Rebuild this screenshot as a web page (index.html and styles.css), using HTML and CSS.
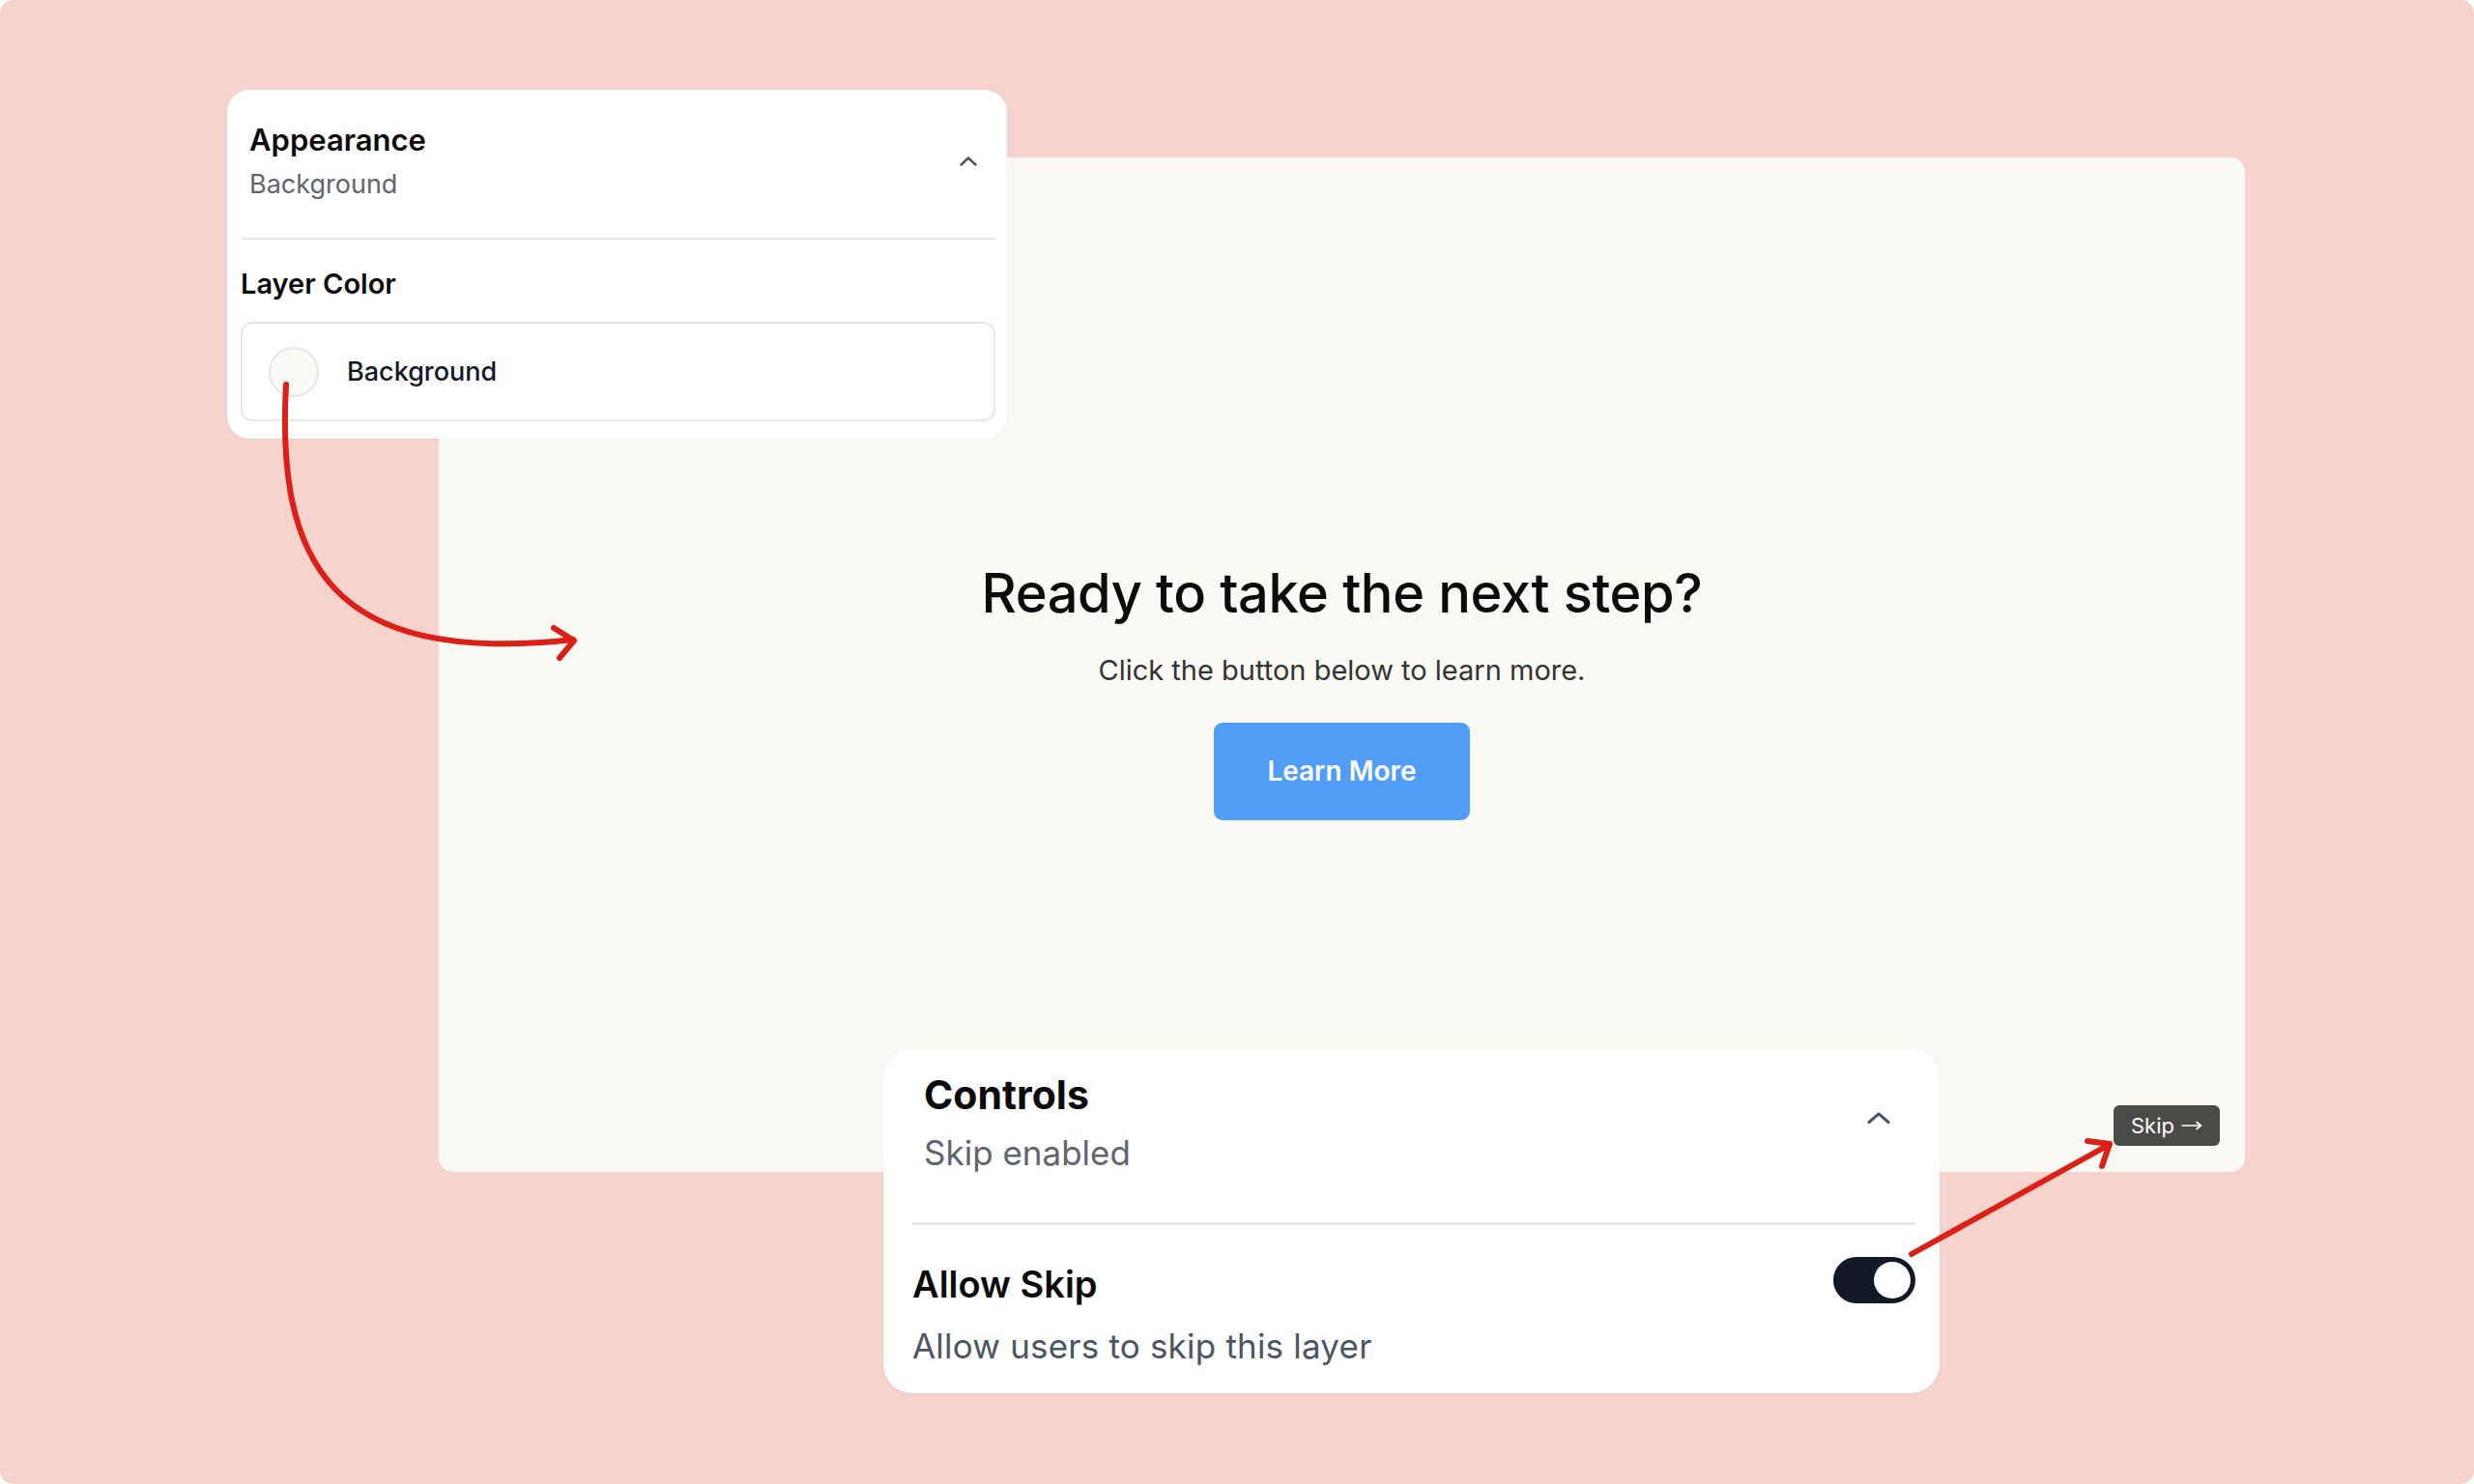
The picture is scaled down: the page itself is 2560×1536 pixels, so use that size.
FILE: index.html
```html
<!DOCTYPE html>
<html lang="en">
<head>
<meta charset="UTF-8" />
<meta name="viewport" content="width=device-width, initial-scale=1" />
<title>Layer settings</title>
<link rel="stylesheet" href="styles.css">
</head>
<body>
  <div class="frame">
    <section class="stage">
      <div class="cta">
        <h2 class="cta-title">Ready to take the next step?</h2>
        <p class="cta-text">Click the button below to learn more.</p>
        <button class="cta-button">Learn More</button>
      </div>
      <button class="skip">Skip
        <svg class="skip-arrow" viewBox="0 0 22 10" aria-hidden="true">
          <path d="M1 5 H20 M16 1.5 L20.5 5 L16 8.5" />
        </svg>
      </button>
    </section>

    <aside class="panel panel-appearance">
      <div class="panel-head">
        <div>
          <div class="panel-title">Appearance</div>
          <div class="panel-sub">Background</div>
        </div>
        <svg class="chevron" viewBox="0 0 18 10" aria-hidden="true">
          <path d="M1.5 8.5 L9 1.5 L16.5 8.5" />
        </svg>
      </div>
      <div class="panel-body">
        <div class="field-label">Layer Color</div>
        <div class="color-field">
          <span class="swatch"></span>
          <span class="color-name">Background</span>
        </div>
      </div>
    </aside>

    <aside class="panel panel-controls">
      <div class="panel-head">
        <div>
          <div class="panel-title">Controls</div>
          <div class="panel-sub">Skip enabled</div>
        </div>
        <svg class="chevron" viewBox="0 0 24 12" aria-hidden="true">
          <path d="M2 10.5 L12 1.8 L22 10.5" />
        </svg>
      </div>
      <div class="panel-body setting">
        <div>
          <div class="setting-name">Allow Skip</div>
          <div class="setting-desc">Allow users to skip this layer</div>
        </div>
        <span class="toggle is-on"><span class="knob"></span></span>
      </div>
    </aside>

    <!-- red pointer arrows drawn on top of everything -->
    <svg class="annotations" viewBox="0 0 2560 1536" aria-hidden="true">
      <path d="M296 398 C 286 580, 340 690, 593 662" />
      <path d="M573 650 L594 663 L579 681" />
      <path d="M1978 1298 L2182 1185" />
      <path d="M2160 1181 L2183 1184 L2175 1207" />
    </svg>
  </div>
</body>
</html>
```

FILE: styles.css
```css
:root {
  --pink: #f6d3cd;
  --paper: #faf9f3;
  --line: #e5e7eb;
  --ink: #0b0b0c;
  --muted: #5f6570;
  --blue: #519df5;
  --red: #dc1f17;
}
html, body {
  margin: 0;
  background: #fff;
  font-family: Inter, "Liberation Sans", sans-serif;
  color: var(--ink);
}
.frame {
  position: relative;
  width: 2560px;
  height: 1536px;
  box-sizing: border-box;
  padding: 163px 237px 323px 454px;
  background: var(--pink);
  border-radius: 14px;
  overflow: hidden;
}

/* preview canvas */
.stage {
  position: relative;
  height: 100%;
  box-sizing: border-box;
  padding-top: 51px;
  background: var(--paper);
  border-radius: 15px;
  display: flex;
  flex-direction: column;
  align-items: center;
  justify-content: center;
}
.cta {
  display: flex;
  flex-direction: column;
  align-items: center;
}
.cta-title {
  margin: 0;
  font-size: 56px;
  font-weight: 500;
  line-height: 70px;
  letter-spacing: -0.4px;
}
.cta-text {
  margin: 25px 0 0;
  font-size: 29px;
  line-height: 40px;
  color: #333;
}
.cta-button {
  margin-top: 34px;
  height: 101px;
  padding: 0 55px;
  border: none;
  border-radius: 9px;
  background: var(--blue);
  color: #fff;
  font-family: inherit;
  font-size: 28px;
  font-weight: 600;
}
.skip {
  position: absolute;
  right: 26px;
  bottom: 27px;
  width: 110px;
  height: 42px;
  padding: 0;
  border: none;
  border-radius: 6px;
  background: #4a4a46;
  color: #fff;
  font-family: inherit;
  font-size: 22px;
  display: flex;
  align-items: center;
  justify-content: center;
  gap: 7px;
}
.skip-arrow {
  width: 22px;
  height: 10px;
  fill: none;
  stroke: #fff;
  stroke-width: 1.6;
  stroke-linecap: round;
  stroke-linejoin: round;
}

/* floating settings panels */
.panel {
  position: absolute;
  box-sizing: border-box;
  background: #fff;
  box-shadow: 0 1px 4px rgba(0, 0, 0, 0.04);
  display: flex;
  flex-direction: column;
  z-index: 2;
}
.panel-head {
  display: flex;
  align-items: center;
  justify-content: space-between;
}
.chevron {
  fill: none;
  stroke: #4b5563;
  stroke-linecap: round;
  stroke-linejoin: round;
}
.panel-sub {
  color: var(--muted);
}

.panel-appearance {
  left: 235px;
  top: 93px;
  width: 807px;
  height: 361px;
  padding: 14px 12px 18px 14px;
  border-radius: 23px;
}
.panel-appearance .panel-head {
  padding: 19px 19px 38px 9px;
  border-bottom: 2px solid var(--line);
}
.panel-appearance .panel-title {
  font-size: 31px;
  font-weight: 600;
  line-height: 37px;
}
.panel-appearance .panel-sub {
  margin-top: 11px;
  font-size: 27px;
  line-height: 34px;
}
.panel-appearance .chevron {
  width: 18px;
  height: 10px;
  stroke-width: 2.4;
}
.field-label {
  margin-top: 29px;
  font-size: 29px;
  font-weight: 600;
  line-height: 34px;
}
.color-field {
  margin-top: 22px;
  height: 103px;
  box-sizing: border-box;
  padding-left: 27px;
  border: 2px solid var(--line);
  border-radius: 12px;
  display: flex;
  align-items: center;
  gap: 29px;
}
.swatch {
  width: 52px;
  height: 52px;
  box-sizing: border-box;
  border: 2px solid var(--line);
  border-radius: 50%;
  background: var(--paper);
}
.color-name {
  font-size: 27px;
  font-weight: 500;
  color: #111827;
}

.panel-controls {
  left: 914px;
  top: 1085px;
  width: 1093px;
  height: 357px;
  padding: 24px 25px 25px 30px;
  border-radius: 30px;
}
.panel-controls .panel-head {
  padding: 0 26px 50px 12px;
  border-bottom: 3px solid var(--line);
}
.panel-controls .panel-title {
  font-size: 41px;
  font-weight: 700;
  line-height: 48px;
}
.panel-controls .panel-sub {
  margin-top: 14px;
  font-size: 35px;
  line-height: 44px;
}
.panel-controls .chevron {
  width: 24px;
  height: 12px;
  margin-top: -10px;
  stroke-width: 3;
}
.setting {
  padding-top: 38px;
  display: flex;
  align-items: flex-start;
  justify-content: space-between;
}
.setting-name {
  font-size: 38px;
  font-weight: 600;
  line-height: 46px;
}
.setting-desc {
  margin-top: 20px;
  font-size: 35px;
  line-height: 43px;
  letter-spacing: 0.2px;
  color: #4b5563;
}
.toggle {
  margin-top: -5px;
  width: 85px;
  height: 48px;
  box-sizing: border-box;
  padding: 5px;
  border-radius: 24px;
  background: #d1d5db;
  display: flex;
}
.toggle.is-on {
  background: #111827;
  justify-content: flex-end;
}
.knob {
  width: 38px;
  height: 38px;
  border-radius: 50%;
  background: #fff;
}

.annotations {
  position: absolute;
  left: 0;
  top: 0;
  width: 2560px;
  height: 1536px;
  pointer-events: none;
  z-index: 3;
  fill: none;
  stroke: var(--red);
  stroke-width: 6;
  stroke-linecap: round;
  stroke-linejoin: round;
}
```
